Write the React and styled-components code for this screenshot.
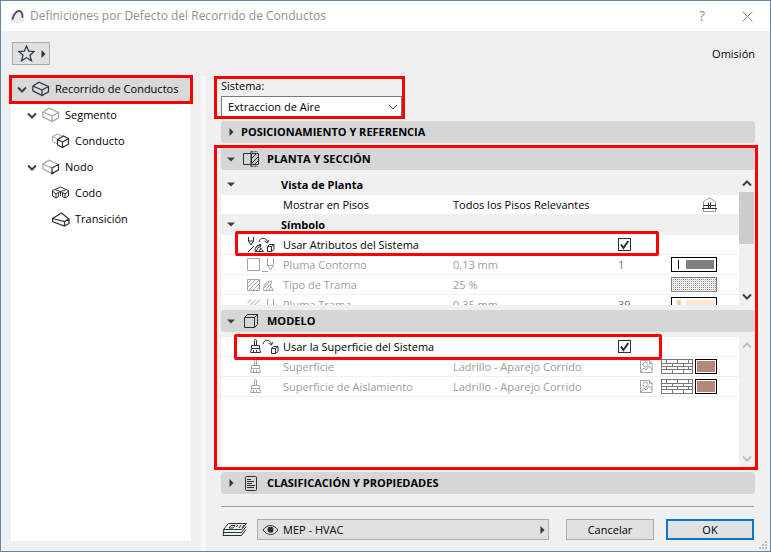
import { useState } from "react";
import styled, { createGlobalStyle } from "styled-components";

const GlobalStyle = createGlobalStyle`
  * {
    box-sizing: border-box;
  }
  body {
    margin: 0;
    font-family: "Open Sans", "Noto Sans", sans-serif;
    font-size: 11px;
    line-height: 16px;
    color: #000;
  }
  button,
  input,
  select {
    font: inherit;
    color: inherit;
  }
  svg {
    display: block;
    flex: none;
  }
`;

const Dialog = styled.main`
  display: flex;
  flex-direction: column;
  min-height: 100vh;
  border: 1px solid #6487a5;
  background: #f0f0f0;
  position: relative;
`;

const TitleBar = styled.header`
  display: flex;
  align-items: center;
  height: 30px;
  padding: 0 15px 0 9px;
  gap: 5px;
  background: #fff;
  color: #929292;
`;

const Title = styled.h1`
  flex: 1;
  margin: 0;
  font-size: 12px;
  font-weight: 400;
`;

const TitleButton = styled.button`
  display: grid;
  place-items: center;
  width: 16px;
  height: 20px;
  margin-left: 24px;
  padding: 0;
  border: none;
  background: none;
  font-size: 14px;
`;

const Toolbar = styled.div`
  display: flex;
  align-items: center;
  justify-content: space-between;
  padding: 11px 15px 11px 11px;
`;

const FavoriteButton = styled.button`
  display: flex;
  align-items: center;
  justify-content: space-between;
  width: 38px;
  height: 23px;
  padding: 0 3px 0 5px;
  border: 1px solid #adadad;
  background: #e1e1e1;
`;

const Body = styled.div`
  flex: 1;
  display: flex;
`;

const Tree = styled.nav`
  flex: none;
  width: 180px;
  margin: 0 10px;
  margin-bottom: 10px;
  background: #fff;
  position: relative;
`;

const TreeItem = styled.button`
  display: flex;
  align-items: center;
  gap: 5px;
  width: 100%;
  height: 26px;
  padding: 0 0 0 ${({ $level }) => 6 + $level * 10}px;
  border: none;
  background: ${({ $selected }) => ($selected ? "#d9d9d9" : "none")};
  text-align: left;
`;

const TreeArrow = styled.span`
  width: 10px;
`;

const Splitter = styled.div`
  width: 5px;
  background: #f7f7f7;
`;

const Content = styled.div`
  flex: 1;
  display: flex;
  flex-direction: column;
  min-width: 0;
  padding: 1px 15px 11px;
`;

/* Red frame laid over the parts that the manual talks about */
const Highlight = styled.span`
  position: absolute;
  inset: ${({ $inset }) => $inset};
  border: 3px solid #fe0000;
  border-radius: ${({ $round }) => ($round ? "2px" : 0)};
  pointer-events: none;
  z-index: 1;
`;

const TreeHighlight = styled(Highlight)`
  height: 29px;
`;

const SystemField = styled.div`
  display: grid;
  width: 181px;
  gap: 2px;
  padding-top: 1px;
  margin-bottom: 4px;
  position: relative;
`;

const SelectBox = styled.div`
  display: grid;
  align-items: center;

  > * {
    grid-area: 1 / 1;
  }
  svg {
    justify-self: end;
    margin-right: 4px;
    pointer-events: none;
  }
`;

const Select = styled.select`
  appearance: none;
  width: 100%;
  height: 21px;
  padding: 0 18px 0 6px;
  border: 1px solid #7a7a7a;
  border-radius: 0;
  background: #fff;
`;

const Sections = styled.div`
  display: flex;
  flex-direction: column;
  gap: 5px;
`;

const SectionGroup = styled.div`
  display: flex;
  flex-direction: column;
  gap: 5px;
  position: relative;
`;

const SectionHeader = styled.button`
  display: flex;
  align-items: center;
  height: 22px;
  width: 100%;
  padding: 0 6px;
  border: none;
  border-radius: 3px;
  background: #d6d6d6;
  font-weight: 700;
  text-align: left;
`;

const SectionArrow = styled.span`
  display: grid;
  justify-items: center;
  width: 8px;
  margin-right: 6px;
`;

const SectionIcon = styled.span`
  display: grid;
  justify-items: center;
  width: 16px;
  margin: 0 8px 0 2px;
`;

const ListPane = styled.div`
  display: flex;
  height: 130px;
  background: #fff;
`;

const Rows = styled.div`
  flex: 1;
  height: 100%;
  overflow: ${({ $scrolls }) => ($scrolls ? "hidden" : "visible")};
`;

const Row = styled.div`
  display: grid;
  grid-template-columns: 62px 170px 165px 1fr;
  align-items: center;
  height: 20px;
  border-bottom: 1px solid #f0f0f0;
  color: ${({ $disabled }) => ($disabled ? "#9d9d9d" : "#000")};
  position: relative;
`;

const GroupRow = styled(Row)`
  grid-template-columns: 60px 1fr;
  background: #f0f0f0;
  font-weight: 700;

  svg {
    margin-left: 6px;
  }
`;

const RowIcon = styled.span`
  padding-left: 26px;
`;

const RowEnd = styled.span`
  display: flex;
  align-items: center;
  justify-content: space-between;
  padding-right: 22px;
`;

const Amount = styled.span`
  color: #6e6e6e;
`;

const RowSwatches = styled.span`
  display: flex;
  align-items: center;
  gap: 2px;
  margin-left: auto;
`;

const TextureSlot = styled.span`
  padding-right: 6px;
`;

const CheckLabel = styled.label`
  grid-column: 2 / 4;
`;

const Checkbox = styled.input`
  appearance: none;
  width: 13px;
  height: 13px;
  margin: 0;
  border: 1px solid #263238;
  background: #fff;

  &:checked {
    background: #fff
      url("data:image/svg+xml,%3Csvg xmlns='http://www.w3.org/2000/svg' viewBox='0 0 11 11'%3E%3Cpath d='M2 5.5L4.4 9 9.3 2' fill='none' stroke='%23263238' stroke-width='2'/%3E%3C/svg%3E");
  }
`;

const Scrollbar = styled.div`
  display: flex;
  flex-direction: column;
  align-items: center;
  justify-content: space-between;
  width: 16px;
  padding: 5px 1px 5px 0;
  background: #f0f0f0;
`;

const ScrollTrack = styled.span`
  flex: 1;
  width: 100%;
  padding-top: 5px;
`;

const ScrollThumb = styled.span`
  display: block;
  height: 52px;
  background: #cdcdcd;
`;

const Footer = styled.footer`
  display: flex;
  align-items: center;
  margin: 12px 1px 0 0;
  padding-top: 12px;
  border-top: 1px solid #a0a0a0;
`;

const LayerButton = styled.button`
  flex: 1;
  display: flex;
  align-items: center;
  gap: 4px;
  height: 21px;
  margin: 0 17px 0 9px;
  padding: 0 3px 0 4px;
  border: 1px solid #adadad;
  background: #e1e1e1;
  text-align: left;

  span {
    flex: 1;
  }
`;

const Button = styled.button`
  width: 88px;
  height: 21px;
  padding: 0;
  border: ${({ $primary }) => ($primary ? "2px solid #0078d7" : "1px solid #adadad")};
  background: #e1e1e1;

  & + & {
    margin-left: 12px;
  }
`;

const ResizeGrip = styled.span`
  position: absolute;
  right: 3px;
  bottom: 2px;
`;

// Icons
const INK = "#263238";
const GREY = "#a3a3a3";

function Icon({ width, height, color = INK, children }) {
  return (
    <svg width={width} height={height} viewBox={`0 0 ${width} ${height}`} fill="none" stroke={color} aria-hidden="true">
      {children}
    </svg>
  );
}

const LogoIcon = () => (
  <svg width="15" height="14" viewBox="0 0 15 14" fill="none" aria-hidden="true">
    <rect x="1" y="4" width="13" height="10" rx="2" fill="#eaeaf0" />
    <path d="M2.500 10C4 5 6.500 2 9 2c3 0 3.500 4 3.500 6" stroke="#50505a" strokeWidth="1.800" strokeLinecap="round" />
  </svg>
);

const CloseIcon = () => (
  <Icon width={11} height={11} color="#8c8c8c">
    <path d="M.5 .5l10 10M10.500 .5l-10 10" />
  </Icon>
);

const StarIcon = () => (
  <Icon width={17} height={17}>
    <path d="M8.500 1l2.200 5.200 5.500.3-4.300 3.700 1.600 5.600-5-3.200-5 3.200 1.600-5.600L.8 6.500l5.500-.3z" strokeWidth="1.200" />
  </Icon>
);

const RightArrow = () => (
  <svg width="5" height="8" viewBox="0 0 5 8" aria-hidden="true">
    <path d="M.5 0v8L4.500 4z" fill="#333" />
  </svg>
);

const DownArrow = () => (
  <svg width="8" height="5" viewBox="0 0 8 5" aria-hidden="true">
    <path d="M0 .5h8L4 4.500z" fill="#404040" />
  </svg>
);

const Chevron = ({ up, color = "#404040" }) => (
  <Icon width={10} height={7} color={color}>
    <path d={up ? "M1 5.500L5 1.500 9 5.500" : "M1 1.500L5 5.500l4-4"} strokeWidth="2" />
  </Icon>
);

const SelectChevron = () => (
  <Icon width={10} height={6} color="#555">
    <path d="M1 1l4 4 4-4" />
  </Icon>
);

const DuctIcon = ({ faded, node }) => (
  <Icon width={18} height={16} color={faded ? GREY : INK}>
    <path d="M.8 5L7 1.200 16.500 5.500M.8 5v4.800L10 14.500M.8 5L10 9" strokeWidth="1.200" />
    <path d="M16.500 5.500v5.300L10 14.500V9z" stroke={node ? INK : undefined} strokeWidth="1.200" />
    {node && <circle cx="10.500" cy="14" r="1.200" fill={INK} stroke="none" />}
  </Icon>
);

const DuctPartIcon = () => (
  <Icon width={18} height={16}>
    <path d="M5.500 11L.5 8.500v-5L6 1l5 2.500M.5 3.500L5 6" stroke={GREY} />
    <path d="M5.500 6.500l6-3.500 5 2.500V11l-6 3.500-5-2.500zM5.500 6.500l5 2.500 6-3.500M10.500 9v5.500" strokeWidth="1.200" />
  </Icon>
);

const ElbowIcon = () => (
  <Icon width={18} height={16}>
    <path d="M.5 5.500l8-3.500 8 3.500v5.500l-3.500 2-2.500-1.500V7.500L13 9l3.500-3M13 9v4M.5 5.500V11L4 13l2.500-1.500V7.500L4 9 .5 6M4 9v4M6.500 7.500l2-1 2 1M8.500 6.500V11M3.500 5l5 1.500 5-1.500" />
  </Icon>
);

const TransitionIcon = () => (
  <Icon width={18} height={16}>
    <path d="M.5 7.500L9.500 2l7.500 6v4.500l-4.500 2.500L.5 10.500zM.5 7.500l12 3L17 8M12.500 10.500V15" strokeWidth="1.200" />
  </Icon>
);

const PlanIcon = () => (
  <Icon width={16} height={16}>
    <path d="M8 2.500H.5v11H8M8 0v16" />
    <path d="M8.500 2.500h7v11h-7z" fill="#c9cbcc" />
    <path d="M9 7l4.500-4.500M9 12l6-6M11.500 13.500L15 10" />
    <path d="M8.500 .8h6.500M8.500 15.200h6.500" strokeDasharray="2 1" />
  </Icon>
);

const CubeIcon = () => (
  <Icon width={14} height={14}>
    <path d="M.5 3.500h10v10H.5zM.5 3.500l3-3h10v10l-3 3M10.500 3.500l3-3" />
  </Icon>
);

const DocumentIcon = () => (
  <Icon width={12} height={15}>
    <rect x=".5" y=".5" width="11" height="14" rx="1" />
    <path d="M2 3.500h4M2 5.500h7M2 7.500h5M2 9.500h8M2 11.500h7" />
  </Icon>
);

const StoreyIcon = () => (
  <Icon width={15} height={15}>
    <path d="M1.500 14.500V4.500L7.500 .8l6 3.700v10z" stroke="#9a9a9a" />
    <path d="M0 11.500h15M1 8.500h13M6.500 5.500v6M8.500 5.500v6" />
  </Icon>
);

const transferShapes = (
  <>
    <path d="M12 5c1-5 7-5 8.500 0M17.500 4l3 2 1.500-3.200" />
    <path d="M20.500 9.500h4v5h-4zM20.500 9.500l2-2h4.500v5l-2.500 2M24.500 9.500l2.500-2" />
  </>
);

const AttributesIcon = () => (
  <Icon width={28} height={16}>
    <path d="M1.500 0v4L4 8l2.500-4V0M1.500 4h5M1 15L7 9" />
    <path d="M8 14.500c0-4 2-7 6-7l-1 3 3.500 4zM9 14l4-6M11.500 14.500l3-3.500M8.500 11l3-3" />
    {transferShapes}
  </Icon>
);

const brushPath = "M7.500 6.500v-5c0-1.300 2-1.300 2 0v5M4.500 9.500v-3h8v3zM4.500 9.500l-1 4h10l-1-4M6.500 13.500V11M9.500 13.500V11";

const BrushTransferIcon = () => (
  <Icon width={32} height={16}>
    <path d={brushPath} />
    <g transform="translate(4 0)">{transferShapes}</g>
  </Icon>
);

const BrushIcon = () => (
  <Icon width={28} height={15} color={GREY}>
    <path d={brushPath} />
  </Icon>
);

const ContourIcon = () => (
  <Icon width={28} height={16} color={GREY}>
    <path d="M.5 1.500h12v12H.5zM15 14.500h6M20.500 1v7l3 5 3-5V1M20.500 8.500h6" />
  </Icon>
);

const FillIcon = () => (
  <Icon width={28} height={16} color={GREY}>
    <path d="M.5 2.500h12v11H.5zM1 6l3.500-3.500M1 10l7.500-7.500M1.500 13.500L12 3M5.500 13.500L12 7M9 13.500l3.500-3.500" />
    <path d="M16.500 13.500c0-5 2-9.500 8-9.500l-1 5 3 4.500zM17 11l5-6M18.500 13.500l5-7M21.500 13.500l2.500-3.500" />
  </Icon>
);

const FillPenIcon = () => (
  <Icon width={28} height={16} color={GREY}>
    <path d="M.5 6L4 2.500M1 10.500L9 2.500M2 13.500l11-11M7 13.500l6-6M20.500 2v6l3 5 3-5V2" />
  </Icon>
);

const TextureIcon = () => (
  <Icon width={13} height={13} color={GREY}>
    <path d="M.5 .5h9l2.500 3v9H.5z" />
    <circle cx="5.500" cy="4.500" r="2.500" />
    <path d="M1 12l3-4 2 2 3-4 3.500 4M9.500 .5v3H12" />
  </Icon>
);

const PenSwatch = ({ line, fill, lineWidth }) => (
  <Icon width={46} height={15} color="#000">
    <rect x=".5" y=".5" width="45" height="14" fill="#fff" />
    <path d={lineWidth > 1 ? "M8 3v9" : "M7.500 3v9"} stroke={line} strokeWidth={lineWidth} />
    <rect x="15" y="3" width="28" height="9" fill={fill} stroke="none" />
  </Icon>
);

const DotsSwatch = () => (
  <Icon width={46} height={15} color="#808080">
    <defs>
      <pattern id="dots" width="2" height="2" patternUnits="userSpaceOnUse">
        <path d="M0 0h1v1H0z" fill="#8c8c8c" stroke="none" />
        <path d="M1 1h1v1H1z" fill="#dedede" stroke="none" />
      </pattern>
    </defs>
    <rect x=".5" y=".5" width="45" height="14" fill="#fff" />
    <rect x="1" y="1" width="44" height="13" fill="url(#dots)" stroke="none" />
  </Icon>
);

const BrickSwatch = () => (
  <Icon width={32} height={15} color="#777">
    <rect x=".5" y=".5" width="31" height="14" fill="#fff" />
    <path d="M0 4.500h32M0 7.500h32M0 10.500h32M5.500 1v3M16.500 1v3M27.500 1v3M11.500 4v4M22.500 4v4M5.500 8v3M16.500 8v3M27.500 8v3M11.500 11v3M22.500 11v3" />
  </Icon>
);

const ColorSwatch = () => (
  <Icon width={22} height={15} color="#000">
    <rect x=".5" y=".5" width="21" height="14" fill="#fff" />
    <rect x="2" y="2" width="18" height="11" fill="#b48778" stroke="none" />
  </Icon>
);

const LayersIcon = () => (
  <Icon width={27} height={16}>
    <path d="M7.500 1.500h18l-5 6h-18zM10 3.500h4l-2 2.500H8zM17 3l-1.500 2M20 3l-2 3M23 3l-2 3" />
    <path d="M3 7.500l-1 3h18.500l4.500-6M3 10.500l-1 3h18.500l4.500-6" />
  </Icon>
);

const EyeIcon = () => (
  <Icon width={17} height={12}>
    <path d="M1 6c4-6 11-6 15 0-4 6-11 6-15 0z" />
    <circle cx="8.500" cy="5.800" r="3" fill={INK} stroke="none" />
  </Icon>
);

const GripIcon = () => (
  <svg width="8" height="8" viewBox="0 0 8 8" fill="#bfbfbf" aria-hidden="true">
    <path d="M6 0h2v2H6zM3 3h2v2H3zM6 3h2v2H6zM0 6h2v2H0zM3 6h2v2H3zM6 6h2v2H6z" />
  </svg>
);

const TREE = [
  { label: "Recorrido de Conductos", level: 0, open: true, icon: <DuctIcon /> },
  { label: "Segmento", level: 1, open: true, icon: <DuctIcon faded /> },
  { label: "Conducto", level: 2, icon: <DuctPartIcon /> },
  { label: "Nodo", level: 1, open: true, icon: <DuctIcon faded node /> },
  { label: "Codo", level: 2, icon: <ElbowIcon /> },
  { label: "Transición", level: 2, icon: <TransitionIcon /> },
];

function Section({ title, icon, open }) {
  return (
    <SectionHeader aria-expanded={Boolean(open)}>
      <SectionArrow>{open ? <DownArrow /> : <RightArrow />}</SectionArrow>
      {icon && <SectionIcon>{icon}</SectionIcon>}
      {title}
    </SectionHeader>
  );
}

function CheckRow({ id, icon, label, highlight }) {
  const [checked, setChecked] = useState(true);
  return (
    <Row>
      <RowIcon>{icon}</RowIcon>
      <CheckLabel htmlFor={id}>{label}</CheckLabel>
      <Checkbox id={id} type="checkbox" checked={checked} onChange={(e) => setChecked(e.target.checked)} />
      <Highlight $inset={highlight} $round />
    </Row>
  );
}

function ParameterRow({ icon, label, value, amount, disabled, children }) {
  return (
    <Row $disabled={disabled}>
      <RowIcon>{icon}</RowIcon>
      <span>{label}</span>
      <span>{value}</span>
      <RowEnd>
        {amount && <Amount>{amount}</Amount>}
        <RowSwatches>{children}</RowSwatches>
      </RowEnd>
    </Row>
  );
}

function SurfaceRow({ label }) {
  return (
    <ParameterRow icon={<BrushIcon />} label={label} value="Ladrillo - Aparejo Corrido" disabled>
      <TextureSlot>
        <TextureIcon />
      </TextureSlot>
      <BrickSwatch />
      <ColorSwatch />
    </ParameterRow>
  );
}

export default function App() {
  return (
    <>
      <GlobalStyle />
      <Dialog>
        <TitleBar>
          <LogoIcon />
          <Title>Definiciones por Defecto del Recorrido de Conductos</Title>
          <TitleButton aria-label="Ayuda">?</TitleButton>
          <TitleButton aria-label="Cerrar">
            <CloseIcon />
          </TitleButton>
        </TitleBar>
        <Toolbar>
          <FavoriteButton aria-label="Favoritos">
            <StarIcon />
            <RightArrow />
          </FavoriteButton>
          <span>Omisión</span>
        </Toolbar>
        <Body>
          <Tree>
            {TREE.map(({ label, level, open, icon }) => (
              <TreeItem key={label} $level={level} $selected={level === 0}>
                <TreeArrow>{open && <Chevron />}</TreeArrow>
                {icon}
                {label}
              </TreeItem>
            ))}
            <TreeHighlight $inset="-1px -2px auto" />
          </Tree>
          <Splitter />
          <Content>
            <SystemField>
              <label htmlFor="system">Sistema:</label>
              <SelectBox>
                <Select id="system">
                  <option>Extraccion de Aire</option>
                </Select>
                <SelectChevron />
              </SelectBox>
              <Highlight $inset="-1px -3px -2px -7px" />
            </SystemField>
            <Sections>
              <Section title="POSICIONAMIENTO Y REFERENCIA" />
              <SectionGroup>
                <Section title="PLANTA Y SECCIÓN" icon={<PlanIcon />} open />
                <ListPane>
                  <Rows $scrolls>
                    <GroupRow>
                      <DownArrow />
                      <span>Vista de Planta</span>
                    </GroupRow>
                    <ParameterRow label="Mostrar en Pisos" value="Todos los Pisos Relevantes">
                      <StoreyIcon />
                    </ParameterRow>
                    <GroupRow>
                      <DownArrow />
                      <span>Símbolo</span>
                    </GroupRow>
                    <CheckRow
                      id="use-attributes"
                      icon={<AttributesIcon />}
                      label="Usar Atributos del Sistema"
                      highlight="-4px 80px -2px 14px"
                    />
                    <ParameterRow icon={<ContourIcon />} label="Pluma Contorno" value="0.13 mm" amount="1" disabled>
                      <PenSwatch line="#000" fill="#808080" lineWidth={1} />
                    </ParameterRow>
                    <ParameterRow icon={<FillIcon />} label="Tipo de Trama" value="25 %" disabled>
                      <DotsSwatch />
                    </ParameterRow>
                    <ParameterRow icon={<FillPenIcon />} label="Pluma Trama" value="0.35 mm" amount="39" disabled>
                      <PenSwatch line="#ffcc99" fill="#ffe6cc" lineWidth={4} />
                    </ParameterRow>
                  </Rows>
                  <Scrollbar>
                    <Chevron up />
                    <ScrollTrack>
                      <ScrollThumb />
                    </ScrollTrack>
                    <Chevron />
                  </Scrollbar>
                </ListPane>
                <Section title="MODELO" icon={<CubeIcon />} open />
                <ListPane>
                  <Rows>
                    <CheckRow
                      id="use-surface"
                      icon={<BrushTransferIcon />}
                      label="Usar la Superficie del Sistema"
                      highlight="-3px 77px -4px 13px"
                    />
                    <SurfaceRow label="Superficie" />
                    <SurfaceRow label="Superficie de Aislamiento" />
                  </Rows>
                  <Scrollbar>
                    <Chevron up color="#bfbfbf" />
                    <Chevron color="#bfbfbf" />
                  </Scrollbar>
                </ListPane>
                <Highlight $inset="-3px -3px -3px -7px" />
              </SectionGroup>
              <Section title="CLASIFICACIÓN Y PROPIEDADES" icon={<DocumentIcon />} />
            </Sections>
            <Footer>
              <LayersIcon />
              <LayerButton>
                <EyeIcon />
                <span>MEP - HVAC</span>
                <RightArrow />
              </LayerButton>
              <Button>Cancelar</Button>
              <Button $primary>OK</Button>
            </Footer>
          </Content>
        </Body>
        <ResizeGrip>
          <GripIcon />
        </ResizeGrip>
      </Dialog>
    </>
  );
}
